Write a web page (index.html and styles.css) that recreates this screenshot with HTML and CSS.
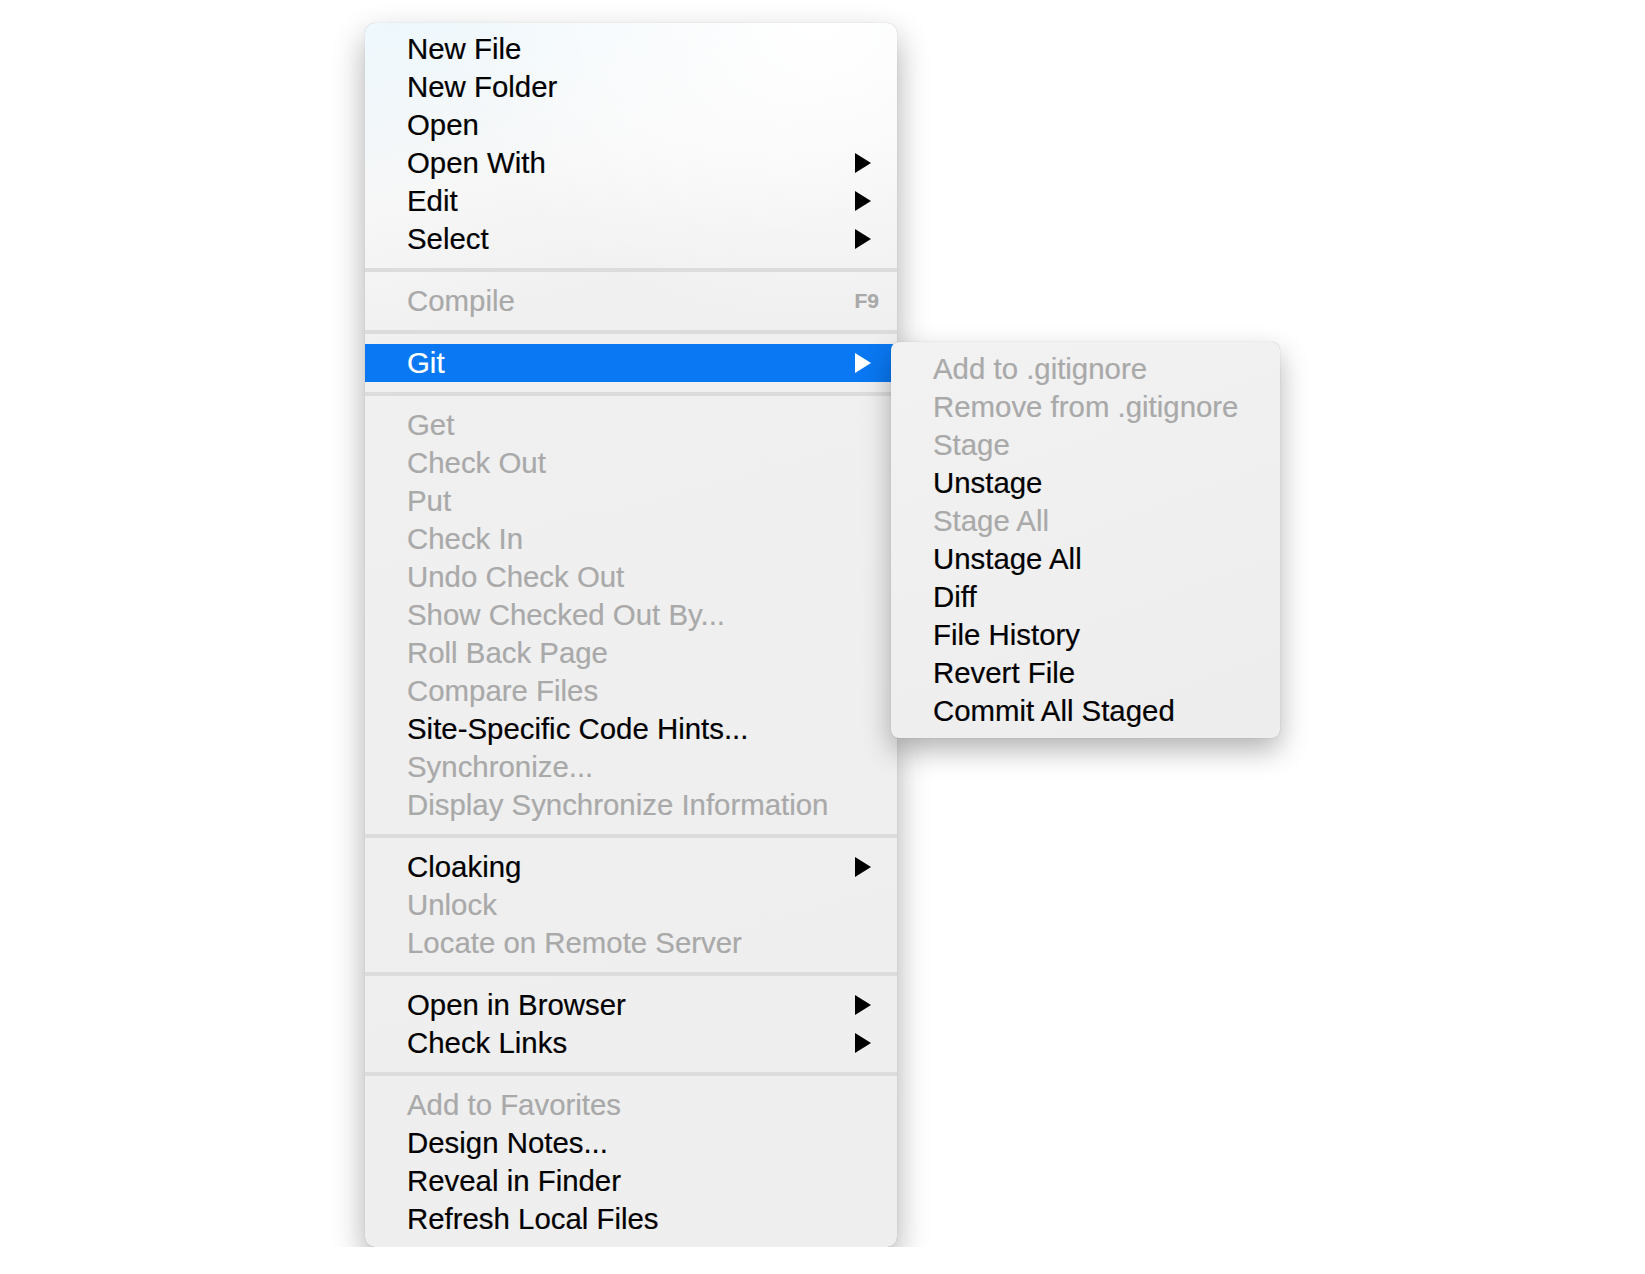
FILE: index.html
```html
<!DOCTYPE html>
<html lang="en">
<head>
    <meta charset="UTF-8">
    <meta name="viewport" content="width=device-width, initial-scale=1.0">
    <title>Site Context Menu</title>
    <link rel="stylesheet" href="styles.css">
</head>
<body>

<div class="menu">
    <div class="item">New File</div>
    <div class="item">New Folder</div>
    <div class="item">Open</div>
    <div class="item">Open With <span class="arrow"><svg width="16" height="20" viewBox="0 0 16 20"><polygon points="0,0 16,10 0,20"/></svg></span></div>
    <div class="item">Edit <span class="arrow"><svg width="16" height="20" viewBox="0 0 16 20"><polygon points="0,0 16,10 0,20"/></svg></span></div>
    <div class="item">Select <span class="arrow"><svg width="16" height="20" viewBox="0 0 16 20"><polygon points="0,0 16,10 0,20"/></svg></span></div>

    <div class="separator"></div>
    <div class="item disabled">Compile <span class="shortcut">F9</span></div>

    <div class="separator"></div>
    <div class="item selected">Git <span class="arrow"><svg width="16" height="20" viewBox="0 0 16 20"><polygon points="0,0 16,10 0,20"/></svg></span>
        <!-- sous-menu Git ouvert -->
        <div class="submenu">
            <div class="item disabled">Add to .gitignore</div>
            <div class="item disabled">Remove from .gitignore</div>
            <div class="item disabled">Stage</div>
            <div class="item">Unstage</div>
            <div class="item disabled">Stage All</div>
            <div class="item">Unstage All</div>
            <div class="item">Diff</div>
            <div class="item">File History</div>
            <div class="item">Revert File</div>
            <div class="item">Commit All Staged</div>
        </div>
    </div>

    <div class="separator"></div>
    <div class="item disabled">Get</div>
    <div class="item disabled">Check Out</div>
    <div class="item disabled">Put</div>
    <div class="item disabled">Check In</div>
    <div class="item disabled">Undo Check Out</div>
    <div class="item disabled">Show Checked Out By...</div>
    <div class="item disabled">Roll Back Page</div>
    <div class="item disabled">Compare Files</div>
    <div class="item">Site-Specific Code Hints...</div>
    <div class="item disabled">Synchronize...</div>
    <div class="item disabled">Display Synchronize Information</div>

    <div class="separator"></div>
    <div class="item">Cloaking <span class="arrow"><svg width="16" height="20" viewBox="0 0 16 20"><polygon points="0,0 16,10 0,20"/></svg></span></div>
    <div class="item disabled">Unlock</div>
    <div class="item disabled">Locate on Remote Server</div>

    <div class="separator"></div>
    <div class="item">Open in Browser <span class="arrow"><svg width="16" height="20" viewBox="0 0 16 20"><polygon points="0,0 16,10 0,20"/></svg></span></div>
    <div class="item">Check Links <span class="arrow"><svg width="16" height="20" viewBox="0 0 16 20"><polygon points="0,0 16,10 0,20"/></svg></span></div>

    <div class="separator"></div>
    <div class="item disabled">Add to Favorites</div>
    <div class="item">Design Notes...</div>
    <div class="item">Reveal in Finder</div>
    <div class="item">Refresh Local Files</div>
</div>

</body>
</html>
```

FILE: styles.css
```css
body {
    font-family: "Liberation Sans", Arial, sans-serif;
    background-color: #fff;
    color: #000;
    margin: 0;
    padding: 23px 0 0 365px;
}
.menu {
    width: 532px;
    padding: 7px 0 9px;
    border-radius: 10px;
    background-color: #efefef;
    /* reflet translucide en haut du menu */
    background-image:
        radial-gradient(ellipse 70% 25% at 85% 0%, #ffffff 0%, rgba(255, 255, 255, 0) 100%),
        linear-gradient(165deg, #eef8fd 0%, #f7f7f7 14%, #f0f0f0 24%, #eeeeee 100%);
    box-shadow: 0 14px 32px rgba(0, 0, 0, 0.32), 0 0 1px rgba(0, 0, 0, 0.25);
}
.item {
    position: relative;
    display: flex;
    align-items: center;
    justify-content: space-between;
    height: 38px;
    padding: 0 26px 0 42px;
    font-size: 29.4px;
    line-height: 38px;
    white-space: nowrap;
    -webkit-text-stroke: 0.2px currentColor;
}
.disabled {
    color: #a9a9a9;
}
.selected {
    background-color: #0a78f2;
    color: #fff;
}
.arrow {
    display: flex;
}
.arrow svg {
    fill: #000;
}
.selected .arrow svg {
    fill: #fff;
}
.shortcut {
    font-size: 21px;
    font-weight: bold;
    margin-right: -8px;
}
.separator {
    height: 4px;
    margin: 10px 0;
    background-color: #dcdcdc;
}
.submenu {
    position: absolute;
    top: -2px;
    left: 526px;
    width: 389px;
    padding: 8px 0;
    border-radius: 8px;
    background-color: #eeeeee;
    background-image: linear-gradient(160deg, #f2f2f2 0%, #ededed 100%);
    box-shadow: 0 12px 28px rgba(0, 0, 0, 0.3), 0 0 1px rgba(0, 0, 0, 0.25);
    color: #000;
}
.submenu .disabled {
    color: #a9a9a9;
}
```
